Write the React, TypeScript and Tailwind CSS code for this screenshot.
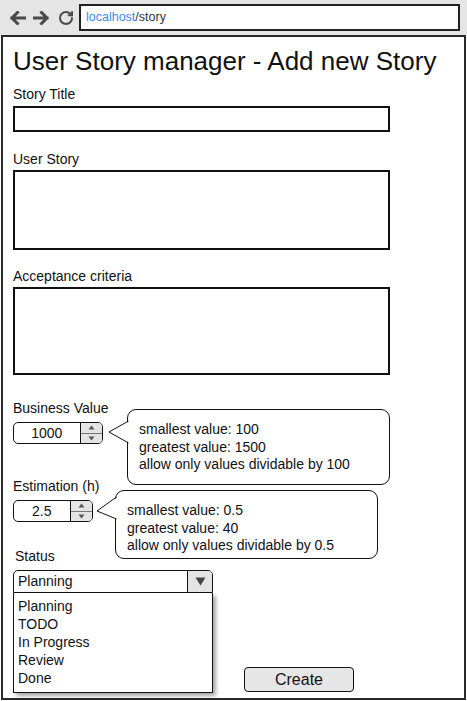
import { RotateCw } from 'lucide-react'

const font = { fontFamily: '"Liberation Sans", Arial, sans-serif' }

function NavArrow({ dir }: { dir: 'left' | 'right' }) {
  return (
    <svg width="17" height="14" viewBox="0 0 17 14" className={dir === 'right' ? 'rotate-180' : ''}>
      <path d="M16 7H3M8.5 1.5L3 7l5.5 5.5" fill="none" stroke="#4a4a4a" strokeWidth="3" strokeLinecap="square" />
    </svg>
  )
}

function Spinner({ value, inputWidth }: { value: string; inputWidth: string }) {
  return (
    <div className="flex h-[22px] rounded-[5px] border border-[#111] overflow-hidden">
      <div className={`${inputWidth} flex items-center justify-center text-[14px] leading-none`}>{value}</div>
      <div className="w-[23px] flex flex-col border-l border-[#111] bg-[#e4e4e4]">
        <div className="flex-1 flex items-center justify-center border-b border-[#777]">
          <svg width="7" height="5" viewBox="0 0 7 5"><path d="M3.5 0.5L6.5 4.5H0.5Z" fill="#555" /></svg>
        </div>
        <div className="flex-1 flex items-center justify-center">
          <svg width="7" height="5" viewBox="0 0 7 5"><path d="M3.5 4.5L6.5 0.5H0.5Z" fill="#555" /></svg>
        </div>
      </div>
    </div>
  )
}

function Callout({ lines, className, tail }: { lines: string[]; className: string; tail: [number, number, number] }) {
  const [a, tip, b] = tail
  return (
    <div className={`absolute w-[263px] rounded-[9px] border border-[#111] bg-white pl-[11px] pt-[11px] text-[14px] leading-[17.5px] ${className}`}>
      <svg width="24" height="60" className="absolute left-[-20px] top-[-1px]" viewBox="0 0 24 60">
        <polygon points={`22,${a} 1,${tip} 22,${b}`} fill="white" />
        <polyline points={`20.5,${a} 1,${tip} 20.5,${b}`} fill="none" stroke="#111" strokeWidth="1" />
      </svg>
      {lines.map((l) => (
        <div key={l}>{l}</div>
      ))}
    </div>
  )
}

export default function App() {
  return (
    <div className="w-[467px] h-[701px] bg-white text-[#111]" style={font}>
      <div className="h-[35px] bg-[#e5e5e5] flex items-center">
        <div className="flex items-center pl-[9px] gap-[7px]">
          <NavArrow dir="left" />
          <NavArrow dir="right" />
          <RotateCw size={16} strokeWidth={3} color="#4a4a4a" className="ml-[1px]" />
        </div>
        <div className="ml-[5px] w-[381px] h-[27px] bg-white border-2 border-[#222] flex items-center pl-[5px] text-[12.5px]">
          <span className="text-[#3b8cf0]">localhost</span>
          <span className="text-[#333]">/story</span>
        </div>
      </div>

      <div className="ml-px w-[465px] h-[665px] border-2 border-[#2a2a2a] pl-[10px]">
        <h1 className="mt-[9px] text-[26px] leading-[30px]">User Story manager - Add new Story</h1>

        <div className="mt-[10px] text-[14px] leading-[16px]">Story Title</div>
        <div className="mt-[4px] w-[377px] h-[26px] border-2 border-[#111]" />

        <div className="mt-[19px] text-[14px] leading-[16px]">User Story</div>
        <div className="mt-[3px] w-[377px] h-[80px] border-2 border-[#111]" />

        <div className="mt-[18px] text-[14px] leading-[16px]">Acceptance criteria</div>
        <div className="mt-[3px] w-[377px] h-[88px] border-2 border-[#111]" />

        <div className="mt-[25px] text-[14px] leading-[16px]">Business Value</div>
        <div className="relative mt-[6px] w-[90px]">
          <Spinner value="1000" inputWidth="w-[67px]" />
          <Callout
            className="left-[114px] top-[-13px] h-[76px]"
            tail={[12, 23, 34]}
            lines={['smallest value: 100', 'greatest value: 1500', 'allow only values dividable by 100']}
          />
        </div>

        <div className="mt-[34px] text-[14px] leading-[16px]">Estimation (h)</div>
        <div className="relative mt-[6px] w-[80px]">
          <Spinner value="2.5" inputWidth="w-[57px]" />
          <Callout
            className="left-[102px] top-[-10px] h-[69px]"
            tail={[7, 21, 29]}
            lines={['smallest value: 0.5', 'greatest value: 40', 'allow only values dividable by 0.5']}
          />
        </div>

        <div className="mt-[26px] pl-[2px] text-[14px] leading-[16px]">Status</div>
        <div className="mt-[6px] flex items-end">
          <div className="w-[200px]">
            <div className="h-[23px] flex border border-[#111] rounded-tr-[5px] rounded-tl-[5px] overflow-hidden">
              <div className="flex-1 flex items-center pl-[4px] text-[14px]">Planning</div>
              <div className="w-[25px] bg-[#e4e4e4] border-l border-[#111] flex items-center justify-center">
                <svg width="11" height="9" viewBox="0 0 11 9"><path d="M0.5 0.5H10.5L5.5 8.5Z" fill="#444" /></svg>
              </div>
            </div>
            <div className="h-[100px] border border-t-0 border-[#111] bg-white pl-[4px] pt-[4px] text-[14px] leading-[18px] shadow-[3px_3px_4px_rgba(0,0,0,0.35)]">
              <div>Planning</div>
              <div>TODO</div>
              <div>In Progress</div>
              <div>Review</div>
              <div>Done</div>
            </div>
          </div>
          <button className="ml-[31px] mb-[1px] w-[110px] h-[25px] rounded-[4px] border border-[#111] bg-[#e6e6e6] text-[16px] leading-none">
            Create
          </button>
        </div>
      </div>
    </div>
  )
}
